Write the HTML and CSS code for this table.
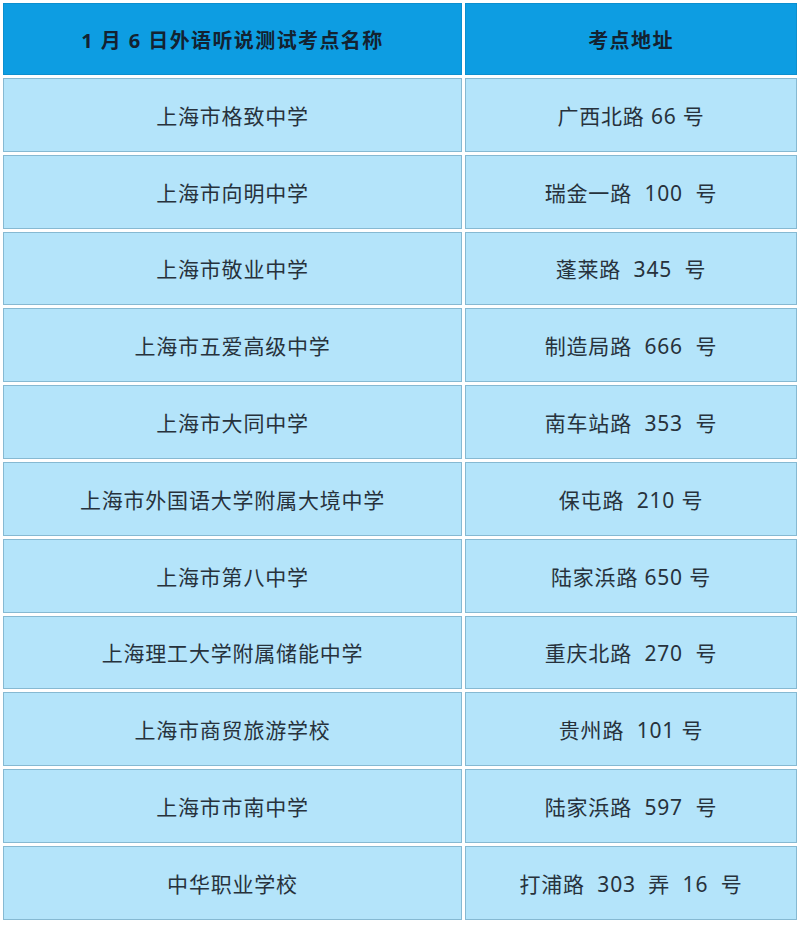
FILE: index.html
```html
<!DOCTYPE html>
<html lang="zh-CN">
<head>
<meta charset="utf-8">
<title>1月6日外语听说测试考点</title>
<link rel="stylesheet" href="styles.css">
</head>
<body>
<table class="sites">
  <thead>
    <tr>
      <th class="col-name">1 月 6 日外语听说测试考点名称</th>
      <th class="col-addr">考点地址</th>
    </tr>
  </thead>
  <tbody>
    <tr><td>上海市格致中学</td><td>广西北路 66 号</td></tr>
    <tr><td>上海市向明中学</td><td>瑞金一路  100  号</td></tr>
    <tr><td>上海市敬业中学</td><td>蓬莱路  345  号</td></tr>
    <tr><td>上海市五爱高级中学</td><td>制造局路  666  号</td></tr>
    <tr><td>上海市大同中学</td><td>南车站路  353  号</td></tr>
    <tr><td>上海市外国语大学附属大境中学</td><td>保屯路  210 号</td></tr>
    <tr><td>上海市第八中学</td><td>陆家浜路 650 号</td></tr>
    <tr><td>上海理工大学附属储能中学</td><td>重庆北路  270  号</td></tr>
    <tr><td>上海市商贸旅游学校</td><td>贵州路  101 号</td></tr>
    <tr><td>上海市市南中学</td><td>陆家浜路  597  号</td></tr>
    <tr><td>中华职业学校</td><td>打浦路  303  弄  16  号</td></tr>
  </tbody>
</table>
</body>
</html>
```
FILE: styles.css
```css
html, body {
  margin: 0;
  padding: 0;
  background: #ffffff;
}

body {
  font-family: "Noto Sans", "Noto Sans CJK SC", sans-serif;
}

.sites {
  width: 800px;
  border-collapse: separate;
  border-spacing: 3px;
  table-layout: fixed;
}

.col-name {
  width: 459px;
}

.col-addr {
  width: 332px;
}

.sites th,
.sites td {
  text-align: center;
  vertical-align: middle;
  white-space: pre;
  padding: 0;
  box-sizing: border-box;
}

.sites th {
  height: 72px;
  background: #0d9de2;
  border: 1px solid #0b8fcf;
  color: #132231;
  font-size: 20px;
  font-weight: 700;
  letter-spacing: 1.4px;
}

.sites td {
  height: 73.8px;
  background: #b4e4fa;
  border: 1px solid #86b9d2;
  color: #27323c;
  font-size: 21px;
  font-weight: 400;
  letter-spacing: 0.8px;
}
```
